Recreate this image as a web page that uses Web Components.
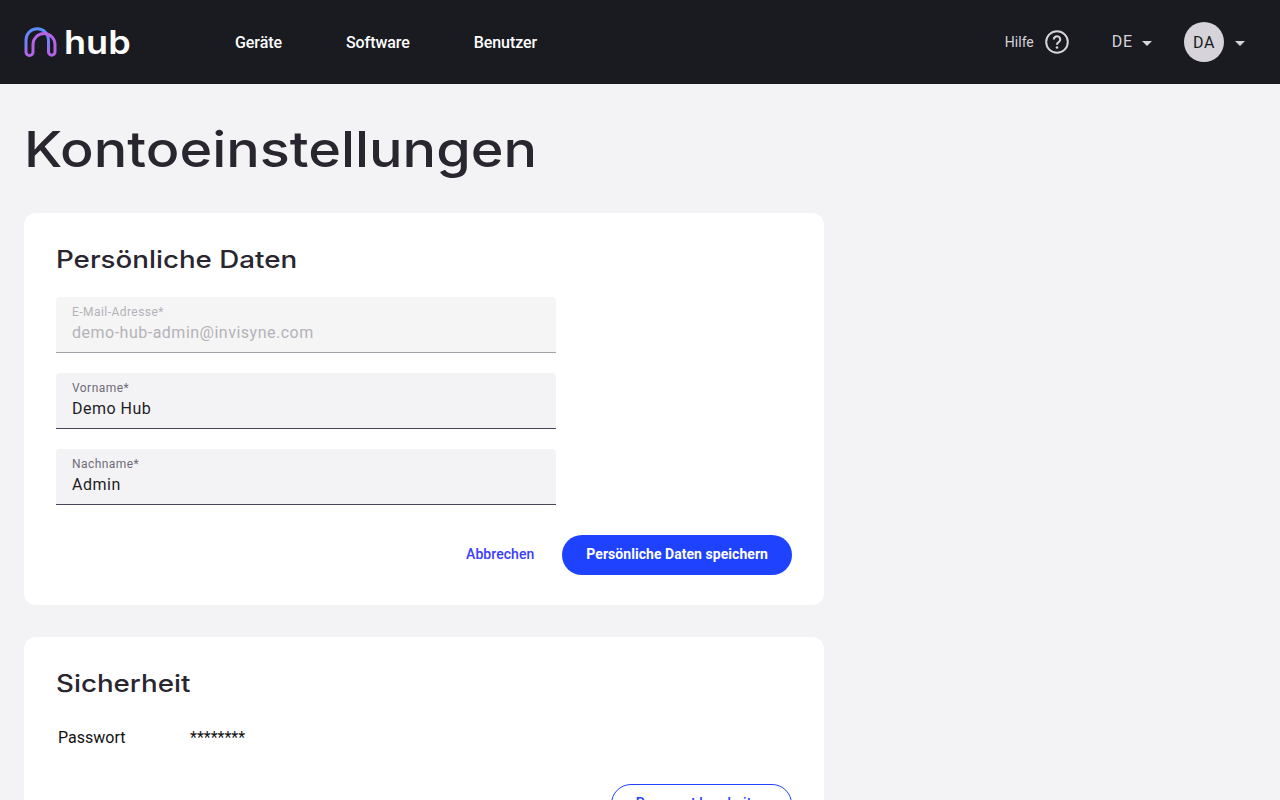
<!DOCTYPE html>
<html lang="de">
<head>
<meta charset="utf-8">
<title>Kontoeinstellungen</title>
<style>
  html, body { margin: 0; background: #f3f3f6; overflow: hidden; height: 800px; }
  body { font-family: Roboto, sans-serif; color: #2a2630; }
</style>
</head>
<body>
<hub-header></hub-header>
<hub-page>
  <hub-card title="Persönliche Daten">
    <hub-field label="E-Mail-Adresse*" value="demo-hub-admin@invisyne.com" disabled></hub-field>
    <hub-field label="Vorname*" value="Demo Hub"></hub-field>
    <hub-field label="Nachname*" value="Admin"></hub-field>
    <div slot="actions" style="display:flex;justify-content:flex-end;align-items:center;gap:12px;margin-top:30px">
      <hub-button variant="text">Abbrechen</hub-button>
      <hub-button variant="filled">Persönliche Daten speichern</hub-button>
    </div>
  </hub-card>
  <hub-card title="Sicherheit">
    <hub-row label="Passwort" value="********"></hub-row>
    <div slot="actions" style="display:flex;justify-content:flex-end;margin-top:34px">
      <hub-button variant="outlined">Passwort bearbeiten</hub-button>
    </div>
  </hub-card>
</hub-page>

<script>
class HubHeader extends HTMLElement {
  connectedCallback() {
    this.attachShadow({ mode: 'open' });
    this.shadowRoot.innerHTML = `
      <style>
        :host { display: flex; align-items: center; height: 84px; background: #191b21; padding: 0 24px; color: #fff; font-family: Roboto, sans-serif; }
        .logo { display: flex; align-items: center; gap: 6px; width: 211px; }
        .logo svg { display: block; }
        .word { font-family: Inter, sans-serif; font-size: 32px; font-weight: 600; line-height: 40px; transform: scaleX(1.126); transform-origin: left; padding-top: 2px; }
        nav { display: flex; gap: 64px; font-size: 16px; font-weight: 500; letter-spacing: -.07px; }
        .right { margin-left: auto; display: flex; align-items: center; color: #d6d3da; padding-right: 11px; }
        .help { display: flex; align-items: center; gap: 11px; font-size: 14px; margin-right: 43px; }
        .lang { display: flex; align-items: center; gap: 9px; font-size: 16px; letter-spacing: .8px; margin-right: 32px; }
        .lang b { font-weight: 400; margin-top: -2px; }
        .caret { width: 0; height: 0; border-left: 5px solid transparent; border-right: 5px solid transparent; border-top: 5px solid #d6d3da; margin-top: 2px; }
        .avatar { width: 40px; height: 40px; border-radius: 50%; background: #d6d3da; color: #191b21; display: flex; align-items: center; justify-content: center; font-size: 16px; letter-spacing: .5px; margin-right: 11px; }
      </style>
      <div class="logo">
        <svg width="34" height="32" viewBox="0 0 34 32" fill="none">
          <defs>
            <linearGradient id="g" gradientUnits="userSpaceOnUse" x1="0" y1="2" x2="0" y2="31">
              <stop offset="0" stop-color="#5a8cff"/>
              <stop offset=".55" stop-color="#7a7cf4"/>
              <stop offset="1" stop-color="#c060e4"/>
            </linearGradient>
          </defs>
          <path d="M9 26 A3.5 3.5 0 0 1 2 26 V14 A11.25 11.25 0 0 1 24.5 14 V26" stroke="url(#g)" stroke-width="3"/>
          <path d="M9 26 V18.5 A11 11 0 0 1 31 18.5 V26 A3.25 3.25 0 0 1 24.5 26" stroke="#b464e6" stroke-width="3"/>
        </svg>
        <span class="word">hub</span>
      </div>
      <nav><span>Geräte</span><span>Software</span><span>Benutzer</span></nav>
      <div class="right">
        <div class="help">Hilfe
          <svg width="24" height="24" viewBox="0 0 24 24" fill="none">
            <circle cx="12" cy="12" r="10.8" stroke="#d6d3da" stroke-width="2"/>
            <path d="M8.8 9.5a3.2 3.2 0 1 1 4.9 2.7c-1.1.7-1.7 1.3-1.7 2.6" stroke="#d6d3da" stroke-width="2.1"/>
            <circle cx="12" cy="17.5" r="1.3" fill="#d6d3da"/>
          </svg>
        </div>
        <div class="lang"><b>DE</b><span class="caret"></span></div>
        <div class="avatar">DA</div>
        <span class="caret"></span>
      </div>`;
  }
}

class HubPage extends HTMLElement {
  connectedCallback() {
    this.attachShadow({ mode: 'open' });
    this.shadowRoot.innerHTML = `
      <style>
        :host { display: block; padding: 32px 24px 0; }
        h1 { width: fit-content; margin: 0 0 31px; font-family: Inter, sans-serif; font-size: 50px; line-height: 66px; font-weight: 500; color: #2a2630; transform: scaleX(1.115); transform-origin: left; white-space: nowrap; }
        .cards { display: flex; flex-direction: column; gap: 32px; width: 800px; }
      </style>
      <h1>Kontoeinstellungen</h1>
      <div class="cards"><slot></slot></div>`;
  }
}

class HubCard extends HTMLElement {
  connectedCallback() {
    this.attachShadow({ mode: 'open' });
    this.shadowRoot.innerHTML = `
      <style>
        :host { display: block; background: #fff; border-radius: 12px; padding: 32px 32px 30px; }
        h2 { width: fit-content; margin: 0 0 22px; font-family: Inter, sans-serif; font-size: 24px; line-height: 30px; font-weight: 500; color: #2a2630; transform: scaleX(1.155); transform-origin: left; white-space: nowrap; }
        .fields { display: flex; flex-direction: column; gap: 20px; }
      </style>
      <h2>${this.getAttribute('title')}</h2>
      <div class="fields"><slot></slot></div>
      <slot name="actions"></slot>`;
  }
}

class HubField extends HTMLElement {
  connectedCallback() {
    const off = this.hasAttribute('disabled');
    this.attachShadow({ mode: 'open' });
    this.shadowRoot.innerHTML = `
      <style>
        :host { display: block; width: 500px; box-sizing: border-box; height: 56px; padding: 8px 16px 0; border-radius: 4px 4px 0 0; font-family: Roboto, sans-serif;
          background: ${off ? '#f5f5f6' : '#f3f3f6'}; border-bottom: 1px solid ${off ? '#a3a1a8' : '#48445a'}; }
        .label { font-size: 12px; line-height: 14px; letter-spacing: .45px; color: ${off ? '#b4b2b8' : '#6f6b76'}; }
        .value { font-size: 16px; line-height: 24px; margin-top: 2px; letter-spacing: .5px; color: ${off ? '#b4b2b8' : '#1f1c26'}; }
      </style>
      <div class="label">${this.getAttribute('label')}</div>
      <div class="value">${this.getAttribute('value')}</div>`;
  }
}

class HubRow extends HTMLElement {
  connectedCallback() {
    this.attachShadow({ mode: 'open' });
    this.shadowRoot.innerHTML = `
      <style>
        :host { display: flex; padding: 0 2px; font-family: Roboto, sans-serif; font-size: 16px; line-height: 24px; color: #111; margin-top: 5px; }
        .l { width: 132px; }
      </style>
      <span class="l">${this.getAttribute('label')}</span><span>${this.getAttribute('value')}</span>`;
  }
}

class HubButton extends HTMLElement {
  connectedCallback() {
    this.attachShadow({ mode: 'open' });
    this.shadowRoot.innerHTML = `
      <style>
        :host { display: inline-flex; align-items: center; height: 40px; box-sizing: border-box; padding: 0 24px 2px; border-radius: 20px; font-family: Roboto, sans-serif; font-size: 14px; font-weight: 500; white-space: nowrap; color: #1f42ff; }
        :host([variant="text"]) { padding: 0 16px 2px; font-weight: 500; color: #3a3cff; letter-spacing: .05px; }
        :host([variant="filled"]) { background: #1f42ff; color: #fff; font-weight: 700; letter-spacing: .05px; }
        :host([variant="outlined"]) { border: 1px solid #1f42ff; font-weight: 500; letter-spacing: .1px; }
      </style>
      <slot></slot>`;
  }
}

customElements.define('hub-header', HubHeader);
customElements.define('hub-page', HubPage);
customElements.define('hub-card', HubCard);
customElements.define('hub-field', HubField);
customElements.define('hub-row', HubRow);
customElements.define('hub-button', HubButton);
</script>
</body>
</html>
